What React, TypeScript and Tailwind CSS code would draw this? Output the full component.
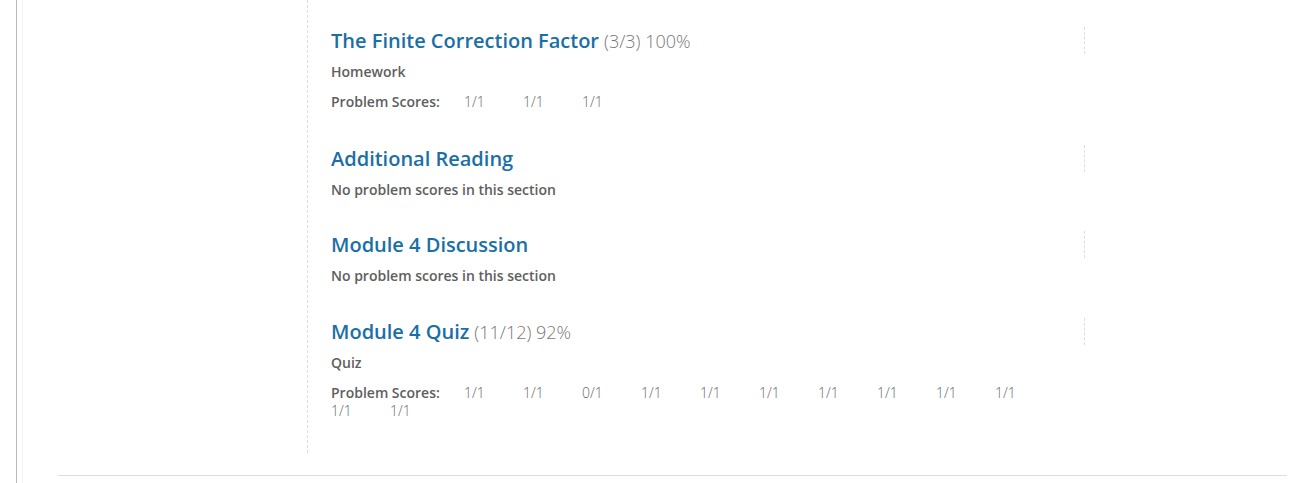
const sections = [
  {
    title: 'The Finite Correction Factor',
    score: '(3/3) 100%',
    type: 'Homework',
    problems: ['1/1', '1/1', '1/1'],
  },
  { title: 'Additional Reading', score: '', type: '', problems: [] },
  { title: 'Module 4 Discussion', score: '', type: '', problems: [] },
  {
    title: 'Module 4 Quiz',
    score: '(11/12) 92%',
    type: 'Quiz',
    problems: ['1/1', '1/1', '0/1', '1/1', '1/1', '1/1', '1/1', '1/1', '1/1', '1/1', '1/1', '1/1'],
  },
]

function Section({ s, idx }: { s: (typeof sections)[number]; idx: number }) {
  const spacing = idx === 0 ? 'mt-[27px] pb-[3px]' : idx === 3 ? 'mt-[32px]' : 'mt-[31px]'
  return (
    <section className={spacing}>
      <div className="w-[754px] h-[27px] border-r border-dashed border-[#ddd] flex items-center">
        <h3 className="text-[20px] leading-[27px] font-semibold text-[#1a6fa6] whitespace-nowrap">
          {s.title}
          {s.score && <span className="ml-[5px] text-[18px] font-light text-[#777]">{s.score}</span>}
        </h3>
      </div>
      {s.type ? (
        <>
          <p className="mt-[8px] text-[14px] leading-[20px] font-semibold text-[#5e5e5e]">{s.type}</p>
          <div className="mt-[11px] w-[740px] flex flex-wrap text-[14px] leading-[18px]">
            <span className="w-[133px] font-semibold text-[#5e5e5e]">Problem Scores:</span>
            {s.problems.map((p, i) => (
              <span key={i} className="w-[59px] text-[14px] text-[#666] font-light">
                {p}
              </span>
            ))}
          </div>
        </>
      ) : (
        <p className="mt-[8px] text-[14px] leading-[20px] font-semibold text-[#5e5e5e]">
          No problem scores in this section
        </p>
      )}
    </section>
  )
}

export default function App() {
  return (
    <div className="w-[1316px] h-[483px] bg-white overflow-hidden font-['Open_Sans',sans-serif]">
      <div className="ml-[16px] h-full border-l border-[#bbb] flex flex-col">
        <div className="ml-[5px] border-l border-[#f3f3f3] flex-1 flex flex-col">
          <div className="flex">
            <div className="w-[285px] h-[453px] border-r border-dashed border-[#ddd] shrink-0" />
            <div className="pl-[23px]">
              {sections.map((s, i) => (
                <Section key={i} s={s} idx={i} />
              ))}
            </div>
          </div>
          <div className="ml-[35px] mt-[22px] w-[1229px] border-t border-[#ddd]" />
        </div>
      </div>
    </div>
  )
}
